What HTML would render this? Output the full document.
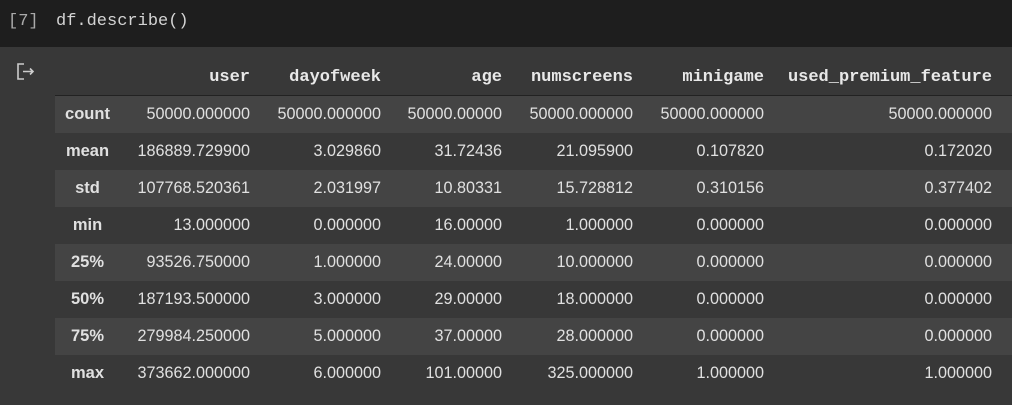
<!DOCTYPE html>
<html><head><style>
body{margin:0;width:1012px;height:405px;background:#383838;overflow:hidden;font-family:"Liberation Sans",sans-serif;}
.top{position:absolute;left:0;top:0;width:1012px;height:47px;background:#1e1e1e;}
.top span{position:absolute;top:12px;font-family:"Liberation Mono",monospace;font-size:17px;color:#d4d4d4;}
table{position:absolute;left:55px;top:59px;border-collapse:collapse;color:#e0e0e0;font-size:16.2px;table-layout:fixed;width:957px;}
th{font-family:"Liberation Mono",monospace;font-weight:bold;font-size:17px;text-align:right;height:36px;border-bottom:1px solid #222;padding:0;color:#e8e8e8;}
td{height:37px;padding:0;text-align:right;}
td.i{font-weight:bold;text-align:center;font-size:16.5px;}
tr.o td{background:#444444;}
td:last-child,th:last-child{padding-right:20px;}
</style></head><body>
<div class="top"><span style="left:8px;color:#aaa">[7]</span><span style="left:56px">df.describe()</span></div>
<svg style="position:absolute;left:17px;top:63px" width="20" height="18" viewBox="0 0 20 18"><path d="M7 1H1V16H7M6 8.5H16M13 5.5L16 8.5L13 11.5" fill="none" stroke="#ccc" stroke-width="1.6"/></svg>
<table>
<colgroup><col style="width:65px"><col style="width:130px"><col style="width:131px"><col style="width:121px"><col style="width:131px"><col style="width:131px"><col style="width:248px"></colgroup>
<tr><th></th><th>user</th><th>dayofweek</th><th>age</th><th>numscreens</th><th>minigame</th><th>used_premium_feature</th></tr>
<tr class="o"><td class="i">count</td><td>50000.000000</td><td>50000.000000</td><td>50000.00000</td><td>50000.000000</td><td>50000.000000</td><td>50000.000000</td></tr>
<tr><td class="i">mean</td><td>186889.729900</td><td>3.029860</td><td>31.72436</td><td>21.095900</td><td>0.107820</td><td>0.172020</td></tr>
<tr class="o"><td class="i">std</td><td>107768.520361</td><td>2.031997</td><td>10.80331</td><td>15.728812</td><td>0.310156</td><td>0.377402</td></tr>
<tr><td class="i">min</td><td>13.000000</td><td>0.000000</td><td>16.00000</td><td>1.000000</td><td>0.000000</td><td>0.000000</td></tr>
<tr class="o"><td class="i">25%</td><td>93526.750000</td><td>1.000000</td><td>24.00000</td><td>10.000000</td><td>0.000000</td><td>0.000000</td></tr>
<tr><td class="i">50%</td><td>187193.500000</td><td>3.000000</td><td>29.00000</td><td>18.000000</td><td>0.000000</td><td>0.000000</td></tr>
<tr class="o"><td class="i">75%</td><td>279984.250000</td><td>5.000000</td><td>37.00000</td><td>28.000000</td><td>0.000000</td><td>0.000000</td></tr>
<tr><td class="i">max</td><td>373662.000000</td><td>6.000000</td><td>101.00000</td><td>325.000000</td><td>1.000000</td><td>1.000000</td></tr>
</table>
</body></html>
